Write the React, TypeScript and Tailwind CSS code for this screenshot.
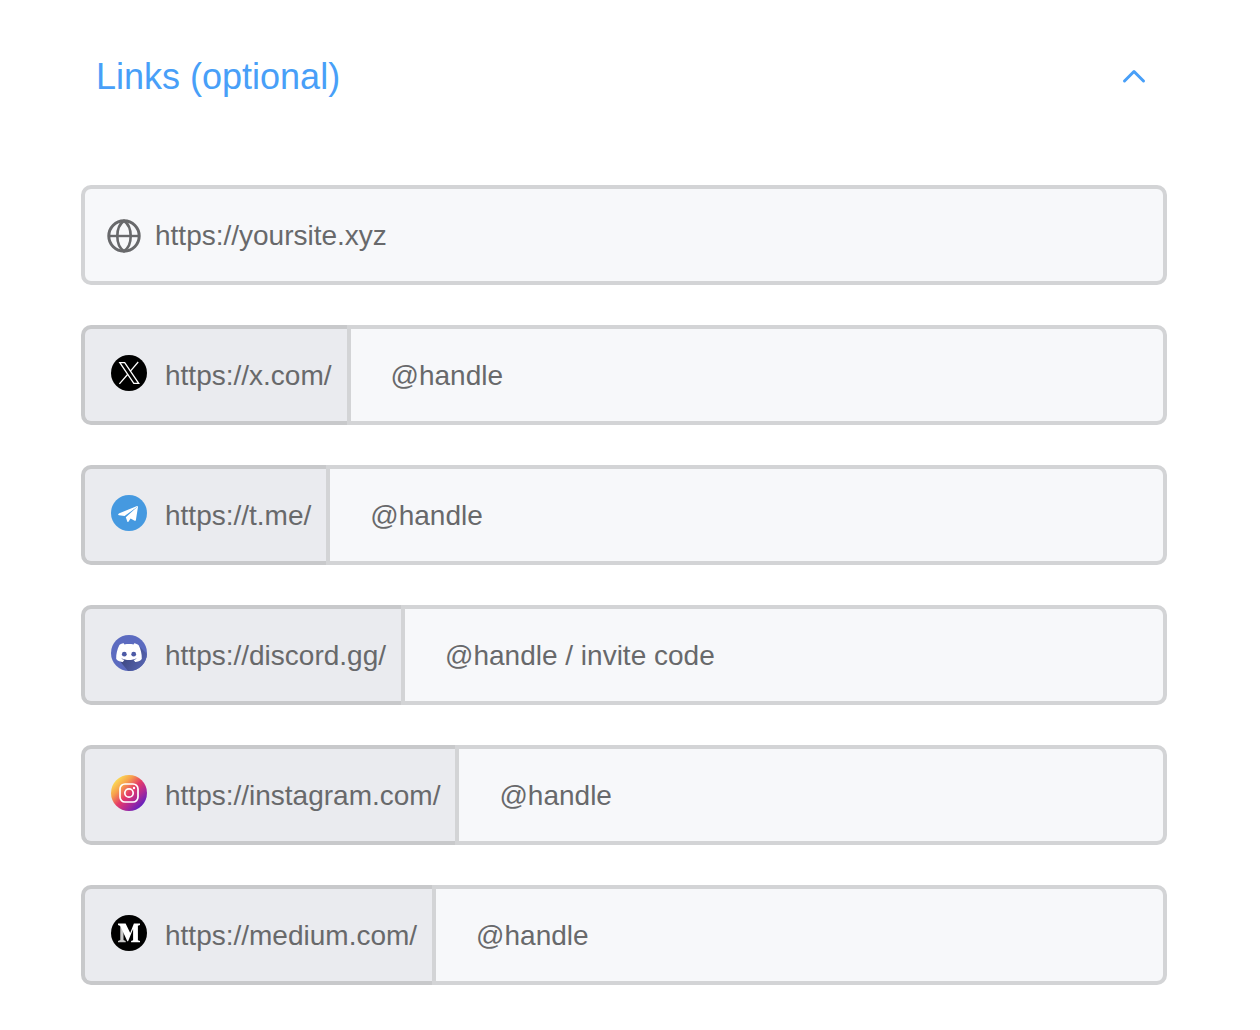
import { useState, type ReactNode } from 'react';

function GlobeIcon() {
  return (
    <svg viewBox="0 0 36 36" className="size-9 shrink-0" fill="none" stroke="#68696b" strokeWidth="3" aria-hidden="true">
      <circle cx="18" cy="18" r="15.2" />
      <path d="M18 2.800C14 5.500 11.300 11 11.300 18S14 30.500 18 33.200C22 30.500 24.700 25 24.700 18S22 5.500 18 2.800z" strokeWidth="2.600" />
      <path d="M3 18h30" strokeWidth="2.400" />
    </svg>
  );
}

function XIcon() {
  return (
    <svg viewBox="0 0 36 36" className="size-9" aria-hidden="true">
      <circle cx="18" cy="18" r="18" fill="#000" />
      <g fill="none" stroke="#fff" strokeWidth="1.3">
        <path d="M8.800 7.600h4.900l14 20.700h-4.900z" />
        <path d="M27.200 7l-8 9.300M16.800 19.200l-8.400 9.700" />
      </g>
    </svg>
  );
}

function TelegramIcon() {
  return (
    <svg viewBox="0 0 36 36" className="size-9" aria-hidden="true">
      <circle cx="18" cy="18" r="18" fill="#4599e0" />
      <g fill="#fff">
        <path d="M7.200 19.200c.3-.5 1-.8 1.800-1.200L25.500 11.200c.8-.3 1.400-.3 1.500 0L13.600 21.100 8 20.200c-.7-.2-1-.5-.8-1z" />
        <path d="M27 11.200c.1.300 0 .8-.1 1.300l-2 12.400c-.1.900-.6 1.100-1.300.8l-4-2.100-2 2.900c-.6.700-1 .8-1.300 0l-1.500-4.300z" />
      </g>
    </svg>
  );
}

function DiscordIcon() {
  return (
    <svg viewBox="0 0 36 36" className="size-9" aria-hidden="true">
      <defs>
        <linearGradient id="discord-shade" x1="0.1" y1="0.4" x2="0.9" y2="0.8">
          <stop offset="0" stopColor="#3d467e" />
          <stop offset="1" stopColor="#5664b0" />
        </linearGradient>
        <clipPath id="discord-clip">
          <circle cx="18" cy="18" r="18" />
        </clipPath>
      </defs>
      <circle cx="18" cy="18" r="18" fill="#5c6bc0" />
      <path d="M8 25l4-2h13l2-13 9 9v17H17z" fill="url(#discord-shade)" clipPath="url(#discord-clip)" />
      <path
        d="M12.800 8.300C10.500 8.600 9 9.500 8.300 10.200 6.300 14 5 19 5.200 24c1.800 2.200 4.300 2.900 6.600 3l1.500-2c-1.800-.6-2.500-1.200-3-1.800 4.700 2.400 10.700 2.400 15.400 0-.5.6-1.400 1.300-3 1.800l1.500 2c2.300-.1 4.800-.8 6.600-3 .2-5-1.100-10-3.100-13.800-1.200-1-2.900-1.700-4.500-1.900l-.6 1.100c-3.100-.6-6.100-.6-9.200 0z"
        fill="#fff"
      />
      <circle cx="13.3" cy="19.200" r="2.400" fill="#4c5aa6" />
      <circle cx="22.700" cy="19.200" r="2.400" fill="#4c5aa6" />
    </svg>
  );
}

function InstagramIcon() {
  return (
    <svg viewBox="0 0 36 36" className="size-9" aria-hidden="true">
      <defs>
        <linearGradient id="instagram-fill" x1="0.1" y1="0.15" x2="0.85" y2="0.9">
          <stop offset="0" stopColor="#fbe055" />
          <stop offset="0.25" stopColor="#f7a04c" />
          <stop offset="0.5" stopColor="#e53c68" />
          <stop offset="0.72" stopColor="#b42a93" />
          <stop offset="1" stopColor="#5a20c4" />
        </linearGradient>
      </defs>
      <circle cx="18" cy="18" r="18" fill="url(#instagram-fill)" />
      <rect x="9" y="9" width="18" height="18" rx="5" fill="none" stroke="#fff" strokeWidth="1.7" />
      <circle cx="18" cy="18" r="4.200" fill="none" stroke="#fff" strokeWidth="1.7" />
      <circle cx="23" cy="13" r="1.2" fill="#fff" />
    </svg>
  );
}

function MediumIcon() {
  return (
    <svg viewBox="0 0 36 36" className="size-9" aria-hidden="true">
      <circle cx="18" cy="18" r="18" fill="#000" />
      <path d="M9.300 10h3.200v15l2.200 1v1.200H7V26l2.300-1z" fill="#c8c8c8" />
      <path
        d="M7 8.600h7.600l4.600 9.400 3.700-9.400H29v1.300l-2.100.9v14.400l2.100.9v1.200h-8.900v-1.200l2-.9V14l-5 12.200h-.8L9.300 11.100 7 9.900z"
        fill="#fff"
      />
    </svg>
  );
}

type HandleField = { id: string; label: string; prefix: string; placeholder: string; icon: ReactNode };

const handleFields: HandleField[] = [
  { id: 'x', label: 'X', prefix: 'https://x.com/', placeholder: '@handle', icon: <XIcon /> },
  { id: 'telegram', label: 'Telegram', prefix: 'https://t.me/', placeholder: '@handle', icon: <TelegramIcon /> },
  { id: 'discord', label: 'Discord', prefix: 'https://discord.gg/', placeholder: '@handle / invite code', icon: <DiscordIcon /> },
  { id: 'instagram', label: 'Instagram', prefix: 'https://instagram.com/', placeholder: '@handle', icon: <InstagramIcon /> },
  { id: 'medium', label: 'Medium', prefix: 'https://medium.com/', placeholder: '@handle', icon: <MediumIcon /> },
];

function HandleInput({ field }: { field: HandleField }) {
  return (
    <div className="flex h-25">
      <label
        htmlFor={field.id}
        className="flex shrink-0 items-center gap-[18px] rounded-l-[10px] border-4 border-r-0 border-[#c8c9cb] bg-[#eaebef] pt-0.5 pr-[15px] pl-[26px]"
      >
        <span className="pb-1.5">{field.icon}</span>
        {field.prefix}
      </label>
      <input
        id={field.id}
        type="text"
        aria-label={field.label}
        placeholder={field.placeholder}
        className="min-w-0 flex-1 rounded-r-[10px] border-4 border-[#d3d4d6] bg-[#f7f8fa] px-10 pt-0.5 outline-none placeholder:text-[#68696b] placeholder:opacity-100 focus:border-[#489ff8]"
      />
    </div>
  );
}

export default function App() {
  const [open, setOpen] = useState(true);
  return (
    <main className="min-h-screen bg-white pt-[49px] pr-[93px] pb-11 pl-[81px] font-['Liberation_Sans',Arial,sans-serif] text-[28px] leading-8 text-[#68696b]">
      <h2>
        <button
          type="button"
          aria-expanded={open}
          aria-controls="links"
          onClick={() => setOpen(!open)}
          className="flex w-full items-center justify-between pr-5 pl-[15px] text-4xl leading-14 text-[#489ff8]"
        >
          Links (optional)
          <svg viewBox="0 0 26 26" className={open ? 'size-[26px]' : 'size-[26px] rotate-180'} fill="none" stroke="currentColor" strokeWidth="3" strokeLinecap="round" strokeLinejoin="round" aria-hidden="true">
            <path d="M3.500 17 13 7.500l9.500 9.500" />
          </svg>
        </button>
      </h2>
      {open && (
        <form id="links" className="mt-20 flex flex-col gap-10">
          <label className="flex h-25 items-center gap-[13px] rounded-[10px] border-4 border-[#d3d4d6] bg-[#f7f8fa] pt-0.5 pr-5 pl-[21px] focus-within:border-[#489ff8]">
            <GlobeIcon />
            <input
              type="url"
              aria-label="Website"
              placeholder="https://yoursite.xyz"
              className="h-full min-w-0 flex-1 outline-none placeholder:text-[#68696b] placeholder:opacity-100"
            />
          </label>
          {handleFields.map((field) => (
            <HandleInput key={field.id} field={field} />
          ))}
        </form>
      )}
    </main>
  );
}
